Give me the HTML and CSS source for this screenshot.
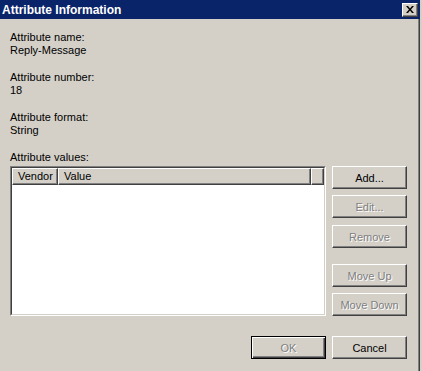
FILE: index.html
```html
<!DOCTYPE html>
<html lang="en">
<head>
    <meta charset="UTF-8">
    <meta name="viewport" content="width=device-width, initial-scale=1.0">
    <title>Attribute Information</title>
    <link rel="stylesheet" href="styles.css">
</head>
<body>
    <div class="dialog">
        <div class="titlebar">
            <span class="title">Attribute Information</span>
            <button class="close" title="Close">
                <svg width="8" height="7" viewBox="0 0 8 7">
                    <path d="M0 0h2l2 2.5L6 0h2L5 3.5 8 7H6L4 4.5 2 7H0l3-3.5z" fill="#000"/>
                </svg>
            </button>
        </div>

        <div class="content">
            <div class="field">
                <div>Attribute name:</div>
                <div>Reply-Message</div>
            </div>
            <div class="field">
                <div>Attribute number:</div>
                <div>18</div>
            </div>
            <div class="field">
                <div>Attribute format:</div>
                <div>String</div>
            </div>

            <div class="values-label">Attribute values:</div>
            <div class="values">
                <div class="listbox">
                    <div class="list-header">
                        <div class="col vendor">Vendor</div>
                        <div class="col value">Value</div>
                        <div class="col filler"></div>
                    </div>
                    <div class="list-body"></div>
                </div>
                <div class="side-buttons">
                    <button class="btn">Add...</button>
                    <button class="btn gap-sm" disabled>Edit...</button>
                    <button class="btn gap-sm" disabled>Remove</button>
                    <button class="btn gap-lg" disabled>Move Up</button>
                    <button class="btn gap-sm" disabled>Move Down</button>
                </div>
            </div>

            <div class="footer">
                <button class="btn default" disabled>OK</button>
                <button class="btn">Cancel</button>
            </div>
        </div>
    </div>
</body>
</html>
```

FILE: styles.css
```css
body {
    margin: 0;
    padding: 0;
    background-color: #d4d0c8;
    font-family: 'Liberation Sans', Arial, sans-serif;
    font-size: 11px;
    color: #000;
}

.dialog {
    width: 420px;
    height: 371px;
    box-sizing: border-box;
    border-right: 1px solid #404040;
    box-shadow: inset -1px 0 #808080;
}

.titlebar {
    height: 19px;
    margin-right: -1px;
    background-color: #0a246a;
    display: flex;
    align-items: center;
    justify-content: space-between;
}

.title {
    color: #fff;
    font-weight: bold;
    font-size: 12px;
    padding-left: 2px;
    padding-top: 1px;
}

.close {
    width: 16px;
    height: 14px;
    margin-right: 2px;
    padding: 0;
    background-color: #d4d0c8;
    border: 1px solid;
    border-color: #fff #404040 #404040 #fff;
    box-shadow: inset -1px -1px #808080;
    display: flex;
    align-items: center;
    justify-content: center;
}

.content {
    padding: 12px 0 0 10px;
}

.field {
    line-height: 13px;
    margin-bottom: 14px;
}

.values-label {
    line-height: 13px;
    margin-bottom: 2px;
}

.values {
    display: flex;
}

.listbox {
    width: 316px;
    height: 150px;
    box-sizing: border-box;
    border: 1px solid;
    border-color: #808080 #fff #fff #808080;
    background-color: #fff;
    position: relative;
}

.listbox::before {
    content: "";
    position: absolute;
    inset: 0;
    border: 1px solid;
    border-color: #404040 #d4d0c8 #d4d0c8 #404040;
    pointer-events: none;
}

.list-header {
    display: flex;
    margin: 1px 1px 0 1px;
    height: 17px;
}

.col {
    box-sizing: border-box;
    height: 17px;
    line-height: 15px;
    background-color: #d4d0c8;
    border: 1px solid;
    border-color: #fff #404040 #404040 #fff;
    box-shadow: inset -1px -1px #808080;
    padding-left: 5px;
}

.vendor {
    width: 46px;
}

.value {
    width: 253px;
}

.filler {
    flex: 1;
}

.side-buttons {
    display: flex;
    flex-direction: column;
    margin-left: 6px;
}

.btn {
    width: 75px;
    height: 23px;
    padding: 0;
    font-family: 'Liberation Sans', Arial, sans-serif;
    font-size: 11px;
    color: #000;
    background-color: #d4d0c8;
    border: 1px solid;
    border-color: #fff #404040 #404040 #fff;
    box-shadow: inset -1px -1px #808080;
}

.btn:disabled {
    color: #808080;
    text-shadow: 1px 1px #fff;
}

.gap-sm {
    margin-top: 6px;
}

.side-buttons .btn:nth-child(3) {
    margin-top: 7px;
}

.gap-lg {
    margin-top: 16px;
}

.footer {
    display: flex;
    justify-content: flex-end;
    gap: 6px;
    width: 397px;
    margin-top: 20px;
}

.btn.default {
    border: 1px solid #000;
    box-shadow: inset 1px 1px #fff, inset -1px -1px #404040, inset -2px -2px #808080;
}
```
